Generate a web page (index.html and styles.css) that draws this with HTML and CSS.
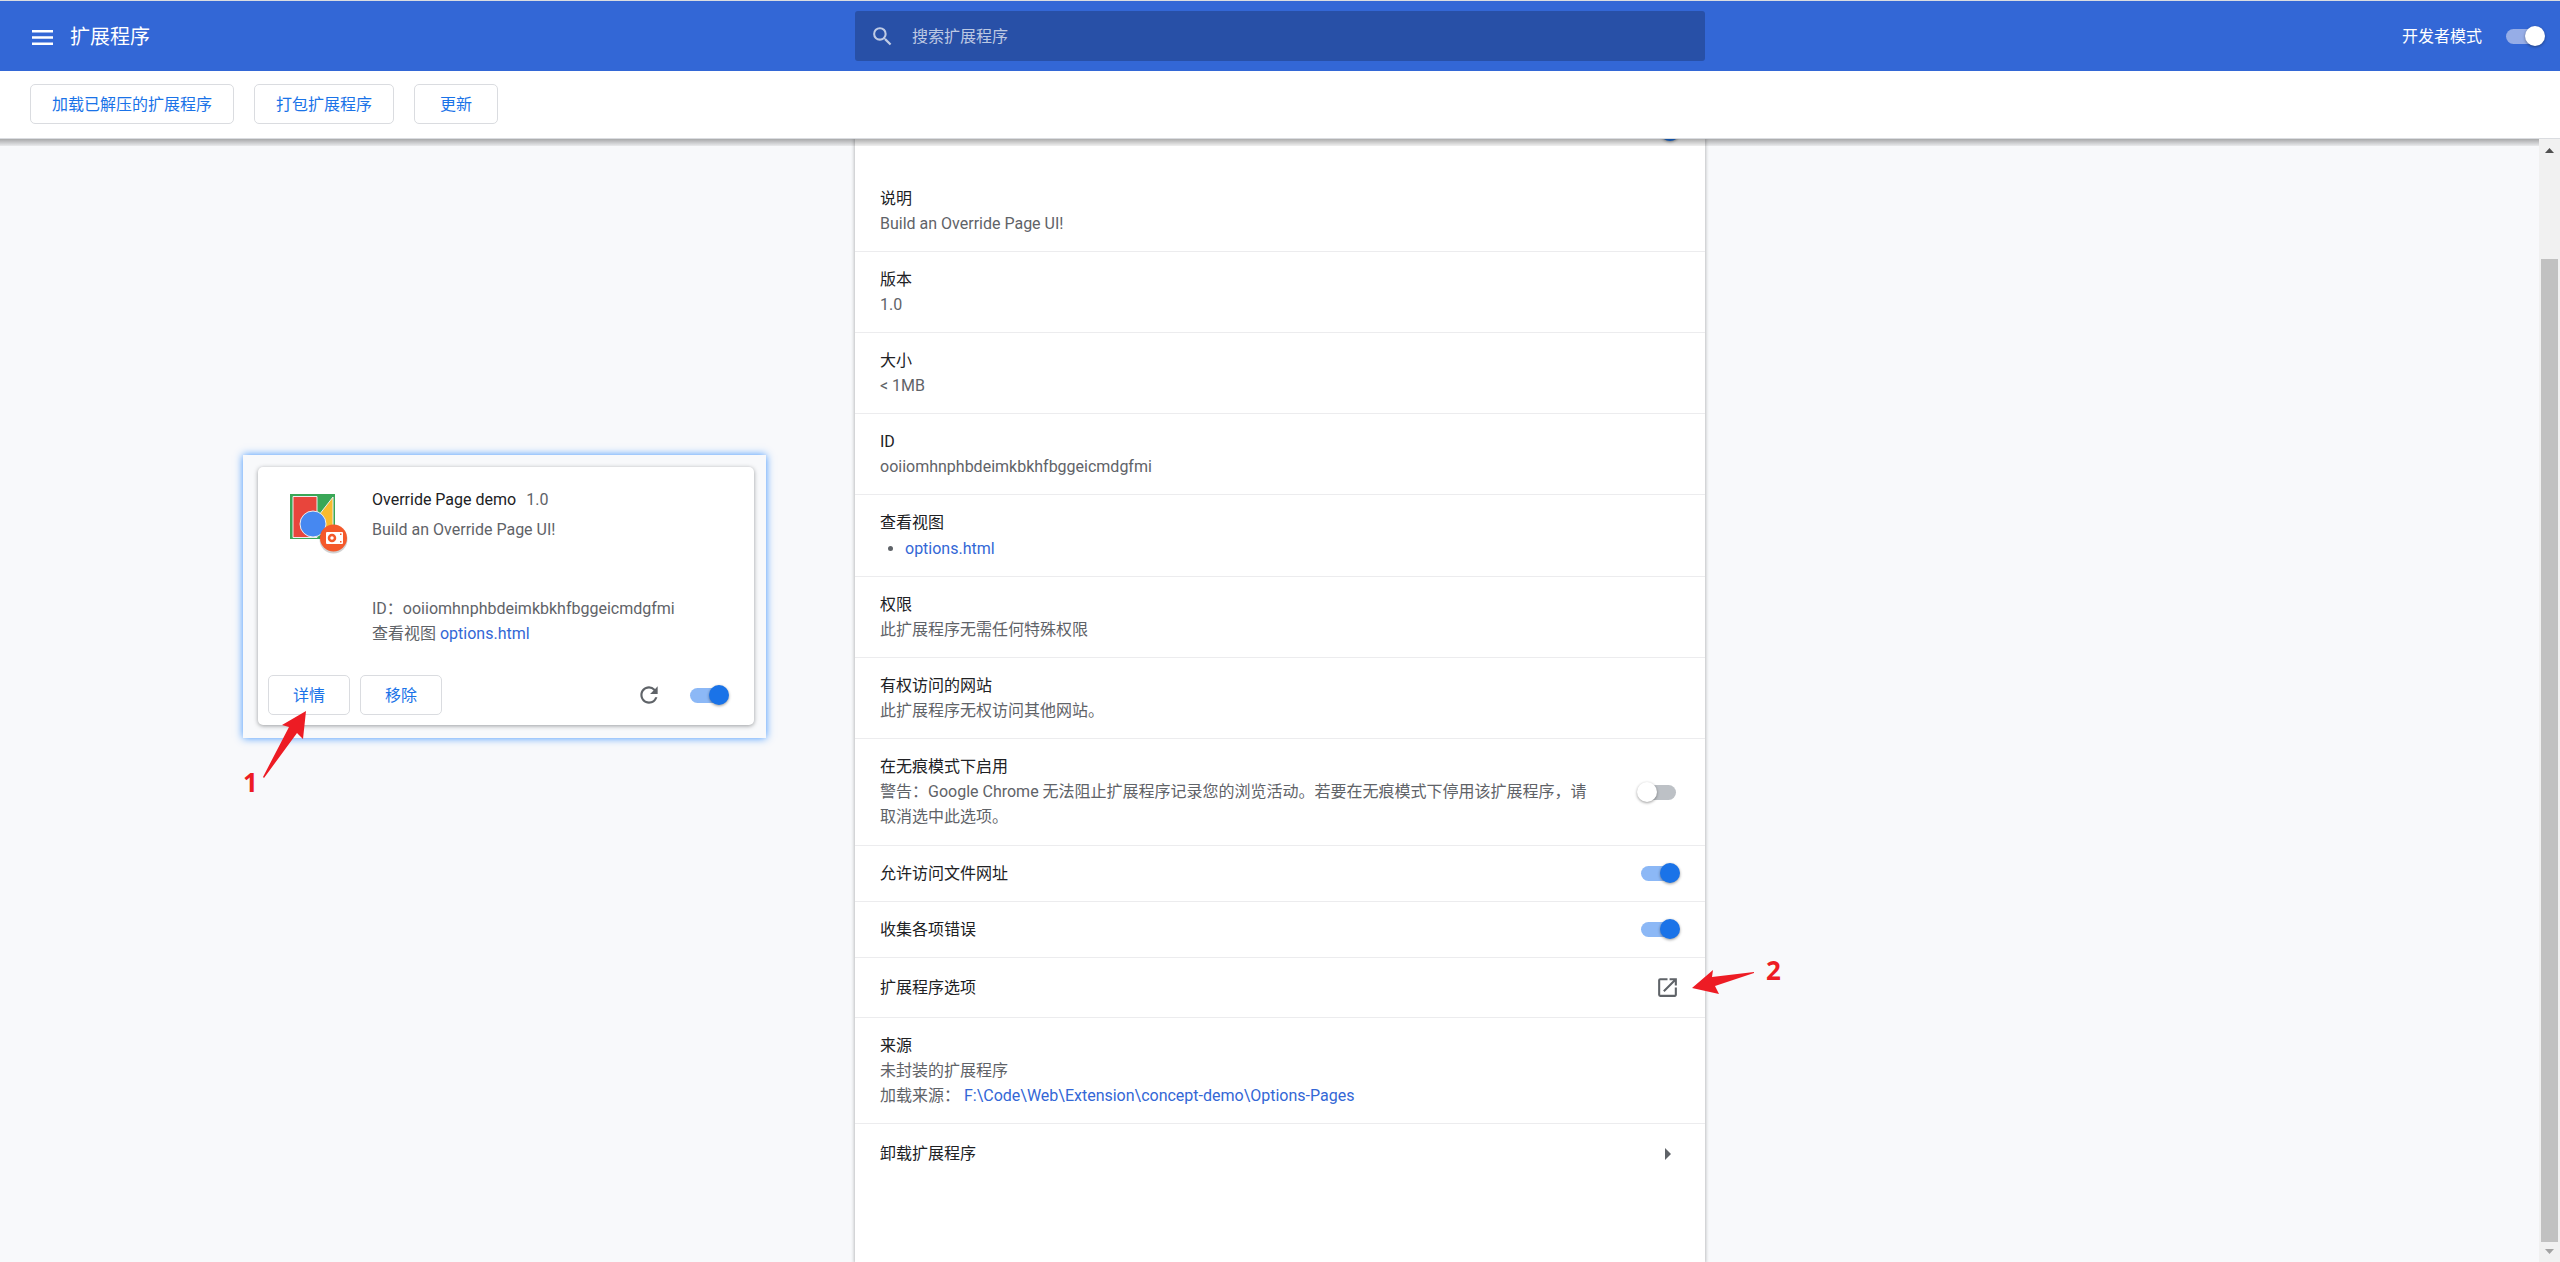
FILE: index.html
```html
<!DOCTYPE html>
<html lang="zh-CN">
<head>
<meta charset="utf-8">
<title>扩展程序</title>
<link rel="stylesheet" href="styles.css">
</head>
<body>
<header class="toolbar">
  <div class="brand">
    <button class="icon-button" type="button" aria-label="主菜单">
      <svg width="21" height="15" viewBox="0 0 21 15" fill="currentColor"><path d="M0 0h21v2.5H0zM0 6.25h21v2.5H0zM0 12.5h21V15H0z"/></svg>
    </button>
    <h1 class="title">扩展程序</h1>
  </div>
  <label class="search">
    <svg width="25" height="25" viewBox="0 0 24 24" fill="currentColor"><path d="M15.5 14h-.79l-.28-.27A6.471 6.471 0 0 0 16 9.500 6.500 6.500 0 1 0 9.500 16c1.610 0 3.090-.59 4.230-1.570l.27.28v.79l5 4.990L20.490 19l-4.990-5zm-6 0C7.010 14 5 11.990 5 9.500S7.010 5 9.500 5 14 7.010 14 9.500 11.990 14 9.500 14z"/></svg>
    <input class="search-input" type="search" placeholder="搜索扩展程序">
  </label>
  <label class="dev-mode">开发者模式
    <input class="toggle toggle-light" type="checkbox" checked>
  </label>
</header>
<nav class="actions">
  <button class="button" type="button">加载已解压的扩展程序</button>
  <button class="button" type="button">打包扩展程序</button>
  <button class="button" type="button">更新</button>
</nav>
<div class="viewport">
  <div class="content">
    <aside class="side">
      <div class="frame">
        <article class="card">
          <div class="card-main">
            <div class="logo">
              <svg width="60" height="64" viewBox="0 0 60 64">
                <path fill="#3aa757" d="M0 0h45v45H0z"/>
                <path fill="#e8453c" stroke="#eee" d="M3 2.500h24v41H3z"/>
                <path fill="#f9bb2d" stroke="#eee" d="M43 3v32H29V21z"/>
                <circle cx="23" cy="30" r="13" fill="#4688f1" stroke="#eee"/>
                <circle cx="43.500" cy="45.500" r="14" fill="#000" opacity=".18"/>
                <circle cx="43.500" cy="44" r="13.500" fill="#f4592b"/>
                <rect x="36" y="38" width="17" height="12" rx="1" fill="#fff"/>
                <circle cx="42" cy="44" r="3" fill="none" stroke="#f4592b" stroke-width="2.500"/>
                <path fill="#f4592b" d="M50 39.500h1.500V41H50zM50 47h1.500v1.500H50z"/>
              </svg>
            </div>
            <div class="info">
              <div class="name-line"><span class="name">Override Page demo</span><span>1.0</span></div>
              <p class="summary">Build an Override Page UI!</p>
              <p class="meta">ID：ooiiomhnphbdeimkbkhfbggeicmdgfmi</p>
              <p class="meta">查看视图 <a href="#">options.html</a></p>
            </div>
          </div>
          <div class="card-actions">
            <button class="button" type="button">详情</button>
            <button class="button" type="button">移除</button>
            <button class="icon-button reload" type="button" aria-label="重新加载">
              <svg width="26" height="26" viewBox="0 0 24 24" fill="currentColor"><path d="M17.650 6.350A7.958 7.958 0 0 0 12 4c-4.420 0-7.990 3.580-7.990 8s3.570 8 7.990 8c3.730 0 6.840-2.550 7.730-6h-2.080A5.990 5.990 0 0 1 12 18c-3.310 0-6-2.690-6-6s2.690-6 6-6c1.660 0 3.140.69 4.220 1.780L13 11h7V4l-2.350 2.350z"/></svg>
            </button>
            <input class="toggle" type="checkbox" checked aria-label="启用">
          </div>
        </article>
        <svg class="arrow-one" width="46" height="70" viewBox="0 0 46 70"><path fill="#ed1c24" d="M44 2 20 16l7 2L1 68l1 1L35 24l6 6z"/></svg>
        <span class="step step-one">1</span>
      </div>
    </aside>
    <main class="details">
      <div class="details-head"><input class="toggle" type="checkbox" checked aria-label="开启"></div>
      <section class="row"><div class="text"><h2>说明</h2><p>Build an Override Page UI!</p></div></section>
      <section class="row"><div class="text"><h2>版本</h2><p>1.0</p></div></section>
      <section class="row"><div class="text"><h2>大小</h2><p>&lt; 1MB</p></div></section>
      <section class="row"><div class="text"><h2>ID</h2><p>ooiiomhnphbdeimkbkhfbggeicmdgfmi</p></div></section>
      <section class="row"><div class="text"><h2>查看视图</h2><ul class="views"><li><a href="#">options.html</a></li></ul></div></section>
      <section class="row"><div class="text"><h2>权限</h2><p>此扩展程序无需任何特殊权限</p></div></section>
      <section class="row"><div class="text"><h2>有权访问的网站</h2><p>此扩展程序无权访问其他网站。</p></div></section>
      <label class="row"><span class="text"><span class="label">在无痕模式下启用</span><span class="hint">警告：Google Chrome 无法阻止扩展程序记录您的浏览活动。若要在无痕模式下停用该扩展程序，请取消选中此选项。</span></span><input class="toggle" type="checkbox"></label>
      <label class="row"><span class="text label">允许访问文件网址</span><input class="toggle" type="checkbox" checked></label>
      <label class="row"><span class="text label">收集各项错误</span><input class="toggle" type="checkbox" checked></label>
      <div class="row row-link">
        <h2 class="text">扩展程序选项</h2>
        <button class="icon-button" type="button" aria-label="扩展程序选项">
          <svg width="25" height="25" viewBox="0 0 24 24" fill="currentColor"><path d="M19 19H5V5h7V3H5a2 2 0 0 0-2 2v14a2 2 0 0 0 2 2h14c1.100 0 2-.9 2-2v-7h-2v7zM14 3v2h3.590l-9.830 9.830 1.410 1.410L19 6.410V10h2V3h-7z"/></svg>
        </button>
        <svg class="arrow-two" width="64" height="25" viewBox="0 0 64 25"><path fill="#ed1c24" d="M1 18 22 0l-1 7 42-5v1L24 16l4 8z"/></svg>
        <span class="step step-two">2</span>
      </div>
      <section class="row"><div class="text"><h2>来源</h2><p>未封装的扩展程序</p><p>加载来源： <a href="#">F:\Code\Web\Extension\concept-demo\Options-Pages</a></p></div></section>
      <div class="row row-link">
        <h2 class="text">卸载扩展程序</h2>
        <button class="icon-button chevron" type="button" aria-label="卸载扩展程序">
          <svg width="6" height="12" viewBox="0 0 6 12" fill="currentColor"><path d="M0 0l6 6-6 6z"/></svg>
        </button>
      </div>
    </main>
  </div>
  <div class="scrollbar">
    <svg width="9" height="5" viewBox="0 0 9 5"><path fill="#505050" d="M0 5l4.500-5L9 5z"/></svg>
    <div class="thumb"></div>
    <svg width="9" height="5" viewBox="0 0 9 5"><path fill="#a3a3a3" d="M0 0l4.500 5L9 0z"/></svg>
  </div>
</div>
</body>
</html>
```
FILE: styles.css
```css
* { box-sizing: border-box; }

body {
  margin: 0;
  height: 100vh;
  display: flex;
  flex-direction: column;
  overflow: hidden;
  background: #f8f9fb;
  border-top: 1px solid #dadce0;
  color: #5f6368;
  font: 16px/25px Roboto, "Noto Sans CJK SC", sans-serif;
}

h1, h2, p, ul { margin: 0; padding: 0; font-size: inherit; font-weight: 400; }
a { color: #3367d6; text-decoration: none; }
svg { display: block; flex: none; }

/* Top bar */
.toolbar {
  flex: none;
  height: 70px;
  display: grid;
  grid-template-columns: 1fr minmax(0, 850px) 1fr;
  align-items: center;
  background: #3367d6;
  color: #fff;
}
.brand { display: flex; align-items: center; gap: 17px; padding: 2px 0 0 32px; }
.brand .title { font-size: 20px; line-height: 30px; }
.icon-button { display: block; padding: 0; border: 0; background: none; color: inherit; }
.search {
  height: 50px;
  display: flex;
  align-items: center;
  gap: 17px;
  padding: 0 15px;
  border-radius: 3px;
  background: #2850a7;
  color: rgba(255, 255, 255, .7);
}
.search-input {
  flex: 1;
  min-width: 0;
  padding: 0;
  border: 0;
  outline: 0;
  background: none;
  color: #fff;
  font: inherit;
}
.search-input::placeholder { color: rgba(255, 255, 255, .7); }
.dev-mode { display: flex; align-items: center; justify-content: flex-end; gap: 24px; padding-right: 15px; }

/* Switches */
.toggle {
  appearance: none;
  flex: none;
  width: 35px;
  height: 15px;
  margin: 0 4px 0 0;
  border-radius: 8px;
  background: #bdc1c6;
}
.toggle::before {
  content: "";
  display: block;
  width: 20px;
  height: 20px;
  margin: -3px 0 0 -4px;
  border-radius: 50%;
  background: #fff;
  box-shadow: 0 1px 3px rgba(0, 0, 0, .4);
}
.toggle:checked { background: #8cb8f6; }
.toggle:checked::before { margin-left: 19px; background: #1a73e8; }
.toggle-light:checked { background: #96ade7; }
.toggle-light:checked::before { background: #fff; }

/* Developer actions */
.actions {
  flex: none;
  display: flex;
  gap: 20px;
  padding: 13px 30px 14px;
  background: #fff;
  border-bottom: 1px solid #dadce0;
}
.button {
  min-width: 84px;
  height: 40px;
  padding: 0 21px;
  border: 1px solid #dadce0;
  border-radius: 5px;
  background: #fff;
  color: #1a73e8;
  font: inherit;
}

/* Scrolling area */
.viewport { flex: 1; min-height: 0; display: flex; position: relative; overflow: hidden; }
.viewport::before {
  content: "";
  position: absolute;
  z-index: 1;
  top: 0;
  left: 0;
  right: 21px;
  height: 7px;
  background: linear-gradient(rgba(0, 0, 0, .32), rgba(0, 0, 0, .06));
}
.content {
  flex: 1;
  display: grid;
  grid-template-columns: 1fr minmax(0, 850px) 1fr;
  margin-right: -21px;
}
.scrollbar {
  position: relative;
  flex: none;
  width: 21px;
  display: flex;
  flex-direction: column;
  align-items: center;
  gap: 7px;
  padding: 9px 0 8px;
  background: #f1f1f1;
}
.thumb { flex: 1; width: 17px; margin-top: 99px; background: #c1c1c1; }

/* Extension card */
.side { padding: 316px 89px 0 243px; }
.frame {
  position: relative;
  padding: 12px 12px 13px 15px;
  box-shadow: 0 0 8px rgba(26, 128, 255, .85);
  background: #f8f9fb;
}
.card {
  padding: 20px 10px 10px;
  border-radius: 5px;
  background: #fff;
  box-shadow: 0 1px 4px rgba(60, 64, 67, .5);
}
.card-main { display: flex; gap: 22px; padding-left: 22px; }
.logo { padding-top: 7px; }
.name-line { display: flex; gap: 10px; }
.name { color: #202124; }
.summary { margin: 5px 0 54px; }
.card-actions { display: flex; align-items: center; gap: 10px; padding-top: 29px; }
.card-actions .button { min-width: 82px; padding: 0 20px; }
.reload { margin-left: auto; margin-right: 18px; color: #5f6368; }
.card-actions .toggle { margin-right: 19px; }

/* Details page */
.details { background: #fff; box-shadow: 0 0 3px 1px rgba(60, 64, 67, .3); }
.details-head {
  height: 64px;
  display: flex;
  align-items: center;
  justify-content: flex-end;
  margin: -40px 0 8px;
  padding-right: 25px;
}
.row {
  position: relative;
  display: flex;
  align-items: center;
  padding: 15px 25px;
  border-bottom: 1px solid #ececee;
}
.row:last-child { border-bottom: 0; }
.row-link { padding: 17px 25px; }
.text { flex: 1; }
h2, .label { color: #202124; }
.text .label, .hint { display: block; }
.text + .toggle { margin-left: 44px; }
.hint { padding-bottom: 1px; }
.views { padding: 1px 0 0 25px; }
.chevron { margin-right: 9px; }

/* Numbered callouts */
.step { position: absolute; color: #ed1c24; font: 700 26px/30px "Noto Sans", sans-serif; }
.step-one { left: 0; top: 312px; }
.step-two { left: 911px; top: -3px; }
.arrow-one { position: absolute; left: 19px; top: 254px; }
.arrow-two { position: absolute; left: 836px; top: 12px; }
```
